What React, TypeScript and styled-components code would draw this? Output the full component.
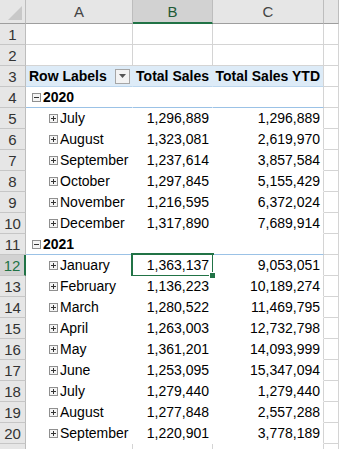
import React from 'react';
import styled, { createGlobalStyle, css } from 'styled-components';

type Line = { kind: 'year' | 'month'; label: string; sales?: string; ytd?: string };

const LINES: Line[] = [
  { kind: 'year', label: '2020' },
  { kind: 'month', label: 'July', sales: '1,296,889', ytd: '1,296,889' },
  { kind: 'month', label: 'August', sales: '1,323,081', ytd: '2,619,970' },
  { kind: 'month', label: 'September', sales: '1,237,614', ytd: '3,857,584' },
  { kind: 'month', label: 'October', sales: '1,297,845', ytd: '5,155,429' },
  { kind: 'month', label: 'November', sales: '1,216,595', ytd: '6,372,024' },
  { kind: 'month', label: 'December', sales: '1,317,890', ytd: '7,689,914' },
  { kind: 'year', label: '2021' },
  { kind: 'month', label: 'January', sales: '1,363,137', ytd: '9,053,051' },
  { kind: 'month', label: 'February', sales: '1,136,223', ytd: '10,189,274' },
  { kind: 'month', label: 'March', sales: '1,280,522', ytd: '11,469,795' },
  { kind: 'month', label: 'April', sales: '1,263,003', ytd: '12,732,798' },
  { kind: 'month', label: 'May', sales: '1,361,201', ytd: '14,093,999' },
  { kind: 'month', label: 'June', sales: '1,253,095', ytd: '15,347,094' },
  { kind: 'month', label: 'July', sales: '1,279,440', ytd: '1,279,440' },
  { kind: 'month', label: 'August', sales: '1,277,848', ytd: '2,557,288' },
  { kind: 'month', label: 'September', sales: '1,220,901', ytd: '3,778,189' },
];

const GRID = '#d4d4d4';
const GREEN = '#217346';

const GlobalStyle = createGlobalStyle`
  html, body {
    margin: 0;
    padding: 0;
    background: #fff;
    overflow: hidden;
  }
  body {
    font-family: "Liberation Sans", Arial, sans-serif;
  }
`;

const Sheet = styled.div`
  display: grid;
  grid-template-columns: 26px 107px 80px 111px 1fr;
  grid-template-rows: 24px;
  grid-auto-rows: 21px;
  width: 339px;
  height: 449px;
  overflow: hidden;
  font-size: 14px;
  color: #000;
`;

const Corner = styled.div`
  position: relative;
  background: #e6e6e6;
  border-right: 1px solid #bdbdbd;
  border-bottom: 1px solid #9e9e9e;
  &::after {
    content: '';
    position: absolute;
    right: 3px;
    bottom: 3px;
    border-style: solid;
    border-width: 0 0 14px 14px;
    border-color: transparent transparent #c8c8c8 transparent;
  }
`;

const ColHeader = styled.div<{ $active?: boolean }>`
  display: flex;
  align-items: center;
  justify-content: center;
  background: ${(p) => (p.$active ? '#d2d2d2' : '#e6e6e6')};
  color: ${(p) => (p.$active ? '#1e5a36' : '#444')};
  border-right: 1px solid #bdbdbd;
  border-bottom: ${(p) => (p.$active ? `2px solid ${GREEN}` : '1px solid #9e9e9e')};
  font-size: 15px;
  padding-top: ${(p) => (p.$active ? '1px' : '0')};
`;

const RowHeader = styled.div<{ $active?: boolean }>`
  display: flex;
  align-items: center;
  justify-content: center;
  background: ${(p) => (p.$active ? '#d2d2d2' : '#e6e6e6')};
  color: ${(p) => (p.$active ? GREEN : '#333')};
  border-right: ${(p) => (p.$active ? `2px solid ${GREEN}` : '1px solid #bdbdbd')};
  border-bottom: 1px solid #c6c6c6;
  font-size: 15px;
`;

type Band = 'plain' | 'head' | 'pivot' | 'year';

const Cell = styled.div<{ $band?: Band; $edge?: boolean; $num?: boolean; $bold?: boolean; $indent?: number; $selected?: boolean }>`
  position: relative;
  display: flex;
  align-items: center;
  justify-content: ${(p) => (p.$num ? 'flex-end' : 'flex-start')};
  padding: 0 3px 0 ${(p) => p.$indent ?? 3}px;
  white-space: nowrap;
  font-weight: ${(p) => (p.$bold ? 700 : 400)};
  border-right: 1px solid ${(p) => (p.$band === 'plain' || !p.$band || p.$edge ? GRID : 'transparent')};
  border-bottom: 1px solid
    ${(p) =>
      p.$band === 'year' ? '#9bc2e6' : p.$band === 'head' ? '#bdd7ee' : p.$band === 'pivot' ? 'transparent' : GRID};
  background: ${(p) => (p.$band === 'head' ? '#ddebf7' : '#fff')};
  ${(p) =>
    p.$selected &&
    css`
      &::after {
        content: '';
        position: absolute;
        left: -2px;
        top: -2px;
        right: -2px;
        bottom: -2px;
        border: 2px solid ${GREEN};
        pointer-events: none;
      }
      &::before {
        content: '';
        position: absolute;
        right: -4px;
        bottom: -4px;
        width: 5px;
        height: 5px;
        background: ${GREEN};
        border: 1px solid #fff;
        z-index: 2;
      }
    `}
`;

const Toggle = styled.svg`
  flex: none;
  width: 9px;
  height: 9px;
  margin-right: 2px;
`;

const FilterButton = styled.span`
  margin-left: auto;
  display: flex;
  align-items: center;
  justify-content: center;
  width: 13px;
  height: 13px;
  border: 1px solid #a6a6a6;
  background: #f3f3f3;
  margin-right: -1px;
`;

function ToggleBox({ open }: { open: boolean }) {
  return (
    <Toggle viewBox="0 0 9 9">
      <rect x="0.5" y="0.5" width="8" height="8" fill="#f4f4f4" stroke="#8f8f8f" />
      <path d="M2 4.5h5" stroke="#333" />
      {!open && <path d="M4.5 2v5" stroke="#333" />}
    </Toggle>
  );
}

export default function App() {
  const cols = ['A', 'B', 'C', ''];
  return (
    <>
      <GlobalStyle />
      <Sheet>
        <Corner />
        {cols.map((c, i) => (
          <ColHeader key={i} $active={c === 'B'}>
            {c}
          </ColHeader>
        ))}

        {[1, 2].map((n) => (
          <React.Fragment key={n}>
            <RowHeader>{n}</RowHeader>
            <Cell />
            <Cell />
            <Cell />
            <Cell />
          </React.Fragment>
        ))}

        <RowHeader>3</RowHeader>
        <Cell $band="head" $bold>
          Row Labels
          <FilterButton>
            <svg width="7" height="4" viewBox="0 0 7 4">
              <path d="M0 0h7L3.5 4z" fill="#555" />
            </svg>
          </FilterButton>
        </Cell>
        <Cell $band="head" $bold $num>
          Total Sales
        </Cell>
        <Cell $band="head" $bold $num $edge>
          Total Sales YTD
        </Cell>
        <Cell />

        {LINES.map((line, i) => {
          const n = i + 4;
          const band: Band = line.kind === 'year' ? 'year' : 'pivot';
          return (
            <React.Fragment key={n}>
              <RowHeader $active={n === 12}>{n}</RowHeader>
              <Cell $band={band} $bold={line.kind === 'year'} $indent={line.kind === 'year' ? 6 : 23}>
                <ToggleBox open={line.kind === 'year'} />
                {line.label}
              </Cell>
              <Cell $band={band} $num $selected={n === 12}>
                {line.sales}
              </Cell>
              <Cell $band={band} $num $edge>
                {line.ytd}
              </Cell>
              <Cell />
            </React.Fragment>
          );
        })}

        {/* row 21 is only a sliver at the bottom edge, its number is out of view */}
        <RowHeader />
        <Cell />
        <Cell />
        <Cell />
        <Cell />
      </Sheet>
    </>
  );
}
